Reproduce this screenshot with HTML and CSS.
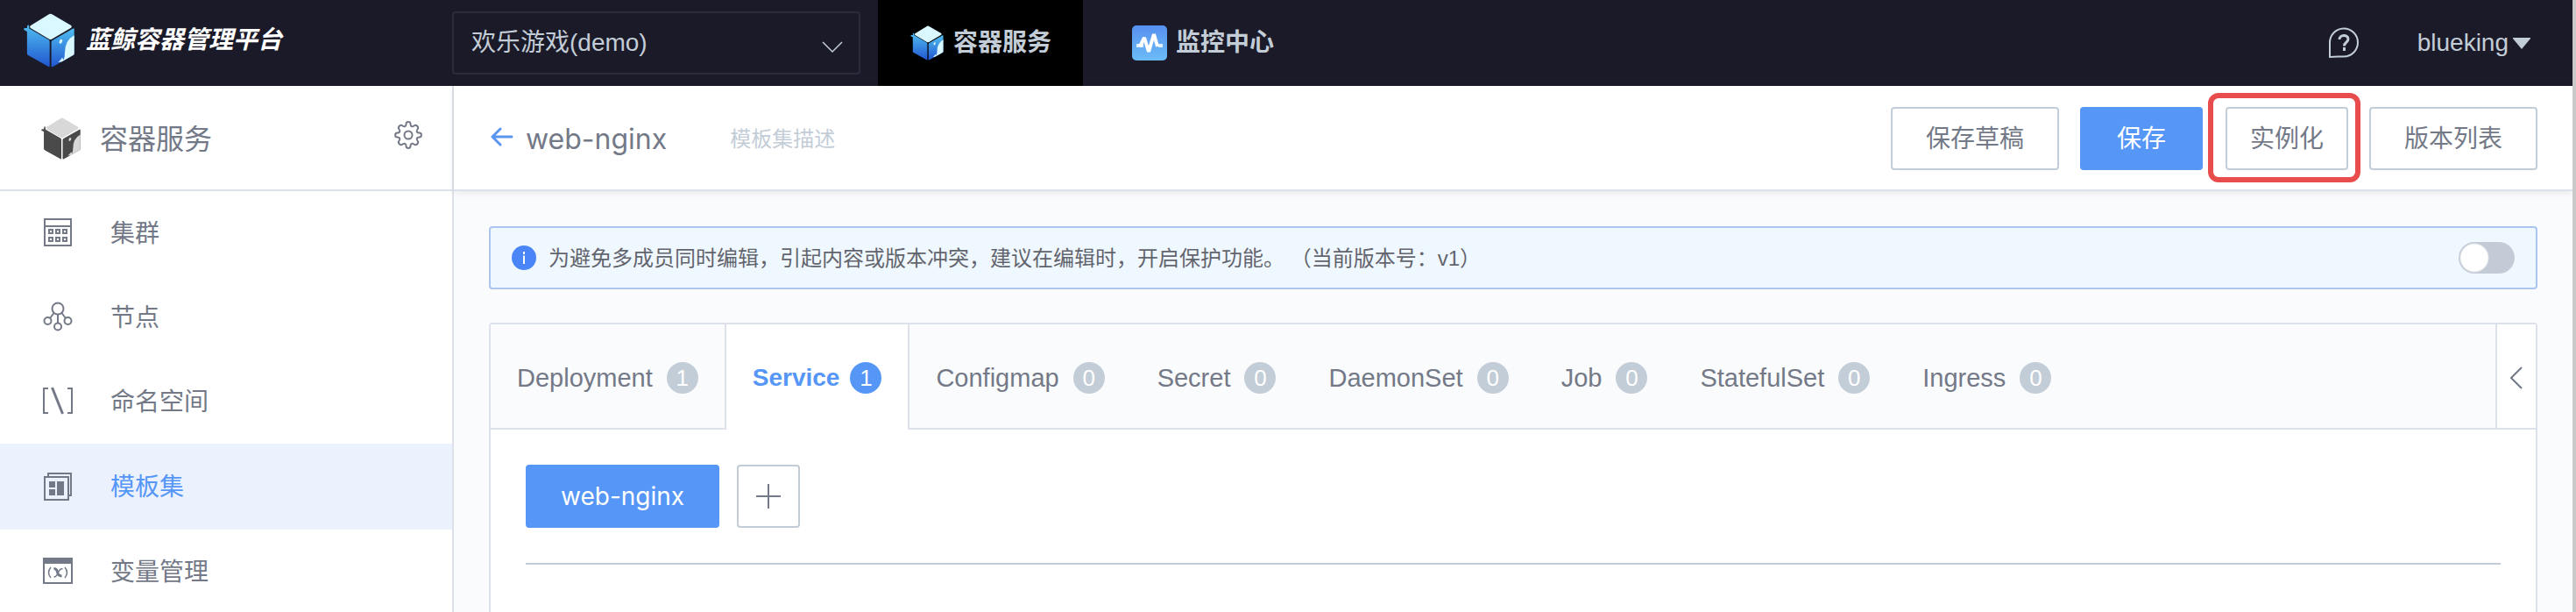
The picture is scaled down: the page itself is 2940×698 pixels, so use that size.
FILE: index.html
```html
<!DOCTYPE html>
<html lang="zh-CN">
<head>
<meta charset="utf-8">
<meta name="viewport" content="width=device-width, initial-scale=1">
<title>蓝鲸容器管理平台</title>
<link rel="stylesheet" href="styles.css">
</head>
<body>
<svg class="defs" aria-hidden="true">
  <defs>
    <linearGradient id="cube-blue" x1="0" y1="0" x2="0" y2="1">
      <stop offset="0" stop-color="#4fbdf0"/>
      <stop offset="1" stop-color="#2156d0"/>
    </linearGradient>
    <linearGradient id="monitor-blue" x1="0" y1="0" x2="0" y2="1">
      <stop offset="0" stop-color="#5790ef"/>
      <stop offset="1" stop-color="#6cbcf8"/>
    </linearGradient>
  </defs>
  <symbol id="cube" viewBox="76 43 182 190">
    <path class="cube-top" d="M168 46q4-2 8 0l68 40q5 4 0 8l-68 40q-4 2-8 0l-66-39q-5-4 0-8z"/>
    <path class="cube-side" d="M90 107l-11-6q-2-4 3-6l8 0 1-9 5-2 2 13 67 39q4 2 4 6v86q0 4-4 2l-71-40q-4-2-4-6z"/>
    <path class="cube-side" d="M175 144q0-4 4-6l72-41q4-2 4 3v84q0 4-4 6l-70 40q-6 3-6-2z"/>
    <path class="cube-top" d="M255 120v64q0 4-4 6l-40 23-12 1q10-7 14-16l4 8q5-8 5-26 0-42 33-60z"/>
    <ellipse class="cube-top" cx="208" cy="142" rx="5" ry="8" transform="rotate(25 208 142)"/>
  </symbol>
</svg>

<header class="topbar">
  <a class="brand" href="#"><svg class="brand-cube cube-color" aria-hidden="true"><use href="#cube"/></svg><span>蓝鲸容器管理平台</span></a>
  <div class="project">
    <select class="project-select" aria-label="项目"><option>欢乐游戏(demo)</option></select>
    <svg class="project-arrow" viewBox="0 0 24 14" aria-hidden="true"><path d="M1 1l11 11L23 1" fill="none" stroke="#c3cdd7" stroke-width="1.5"/></svg>
  </div>
  <nav class="topnav">
    <a class="topnav-item is-active" href="#"><svg class="nav-icon cube-color" aria-hidden="true"><use href="#cube"/></svg>容器服务</a>
    <a class="topnav-item" href="#"><svg class="nav-icon" viewBox="0 0 40 40" aria-hidden="true"><rect width="40" height="40" rx="5" fill="url(#monitor-blue)"/><path d="M5 23h8M30 23h5" fill="none" stroke="#fff" stroke-opacity=".8" stroke-width="4"/><path d="M9 24l5-10 5 16 6-20 4 14" fill="none" stroke="#fff" stroke-width="4" stroke-linejoin="bevel"/></svg>监控中心</a>
  </nav>
  <div class="account">
    <button class="help" type="button" aria-label="帮助"><svg viewBox="0 0 36 36" aria-hidden="true"><path d="M2 34V18A16 16 0 1 1 18 33.500H12L2 34z" fill="none" stroke="#c3cdd7" stroke-width="2"/><path d="M13 14c0-6 10-6 10-.5 0 4-4.500 3.500-4.500 8M18.500 23v4" fill="none" stroke="#c3cdd7" stroke-width="3"/></svg></button>
    <button class="user" type="button">blueking<svg class="caret" viewBox="0 0 20 13" aria-hidden="true"><path d="M0 0h20v1L10 13 0 1z" fill="#c3cdd7"/></svg></button>
  </div>
</header>

<div class="layout">
  <aside class="sidebar">
    <div class="sidebar-head">
      <svg class="side-cube cube-gray" aria-hidden="true"><use href="#cube"/></svg>
      <h2 class="sidebar-title">容器服务</h2>
      <button class="gear" type="button" aria-label="设置"><svg viewBox="0 0 32 32" fill="none" stroke="#737987" stroke-width="2" aria-hidden="true"><path stroke-linejoin="round" d="M13.500 3.500C13.500 .3 18.500 .3 18.500 3.500C18.500 6.500 20.500 7 22.500 5.500C25 3.500 28.500 7 26.500 9.500C25 11.500 25.500 13.500 28.500 13.500C31.700 13.500 31.700 18.500 28.500 18.500C25.500 18.500 25 20.500 26.500 22.500C28.500 25 25 28.500 22.500 26.500C20.500 25 18.500 25.500 18.500 28.500C18.500 31.700 13.500 31.700 13.500 28.500C13.500 25.500 11.500 25 9.500 26.500C7 28.500 3.500 25 5.500 22.500C7 20.500 6.500 18.500 3.500 18.500C.3 18.500 .3 13.500 3.500 13.500C6.500 13.500 7 11.500 5.500 9.500C3.500 7 7 3.500 9.500 5.500C11.500 7 13.500 6.500 13.500 3.500z"/><circle cx="16" cy="16" r="4.500"/></svg></button>
    </div>
    <nav class="menu">
      <a class="menu-item" href="#"><svg class="menu-icon" viewBox="0 0 36 36" fill="none" stroke="#737987" stroke-width="2" aria-hidden="true"><path d="M3 2h30v30H3zM3 10h30M8 14h4v4H8zM16 14h4v4h-4zM24 14h4v4h-4zM8 23h4v4H8zM16 23h4v4h-4zM24 23h4v4h-4z"/></svg><span>集群</span></a>
      <a class="menu-item" href="#"><svg class="menu-icon" viewBox="0 0 36 36" fill="none" stroke="#737987" stroke-width="2" aria-hidden="true"><circle cx="18" cy="8" r="6.500"/><circle cx="6.500" cy="22" r="4"/><circle cx="29.500" cy="22" r="4"/><circle cx="18" cy="28.500" r="4"/><path d="M18 14.500v10M13.500 13L9 19M22.500 13l4.500 6"/></svg><span>节点</span></a>
      <a class="menu-item" href="#"><svg class="menu-icon" viewBox="0 0 36 36" fill="none" stroke="#737987" stroke-width="2" aria-hidden="true"><path d="M7 3H2v28h5M29 3h5v28h-5"/><path d="M11.500 2l12 30" stroke-width="3"/></svg><span>命名空间</span></a>
      <a class="menu-item is-active" href="#"><svg class="menu-icon" viewBox="0 0 36 36" fill="none" stroke="#737987" stroke-width="2" aria-hidden="true"><path d="M3 7h27v26H3zM7 7V3h26v25h-3"/><path d="M8 12h7v7H8zM8 21h7v7H8zM17 12h8v16h-8z" fill="#737987" stroke="none"/></svg><span>模板集</span></a>
      <a class="menu-item" href="#"><svg class="menu-icon" viewBox="0 0 36 36" fill="none" stroke="#737987" stroke-width="2" aria-hidden="true"><path d="M2 3h32v28H2z"/><path d="M1 2h34v7H1z" fill="#737987" stroke="none"/><path d="M10 13q-5 6 0 12M26 13q5 6 0 12M23.500 15q-3-1-5 4t-5 5" stroke-width="1.500"/><path d="M13.500 15q3-1 4 3.500t5 4.500" stroke-width="3"/></svg><span>变量管理</span></a>
    </nav>
  </aside>

  <main class="main">
    <div class="page-head">
      <button class="back" type="button" aria-label="返回"><svg viewBox="0 0 26 22" fill="none" stroke="#5a96f0" stroke-width="3" stroke-linecap="round" stroke-linejoin="round" aria-hidden="true"><path d="M24 11H2M11 2l-9 9 9 9"/></svg></button>
      <h1 class="page-title">web-nginx</h1>
      <span class="page-desc">模板集描述</span>
      <div class="actions">
        <button class="btn" type="button">保存草稿</button>
        <button class="btn btn-primary" type="button">保存</button>
        <button class="btn btn-marked" type="button">实例化</button>
        <button class="btn" type="button">版本列表</button>
      </div>
    </div>

    <div class="content">
      <div class="notice">
        <svg class="notice-icon" viewBox="0 0 28 28" aria-hidden="true"><circle cx="14" cy="14" r="14" fill="#4a86f7"/><path d="M14 7v3M14 11.500V21" stroke="#fff" stroke-width="2"/></svg>
        <label class="notice-text" for="protect">为避免多成员同时编辑，引起内容或版本冲突，建议在编辑时，开启保护功能。 （当前版本号：v1）</label>
        <input class="switch" type="checkbox" id="protect">
      </div>

      <section class="panel">
        <div class="tabs" role="tablist">
          <button class="tab" role="tab" type="button">Deployment<span class="count">1</span></button>
          <button class="tab is-active" role="tab" type="button" aria-selected="true">Service<span class="count">1</span></button>
          <button class="tab" role="tab" type="button">Configmap<span class="count">0</span></button>
          <button class="tab" role="tab" type="button">Secret<span class="count">0</span></button>
          <button class="tab" role="tab" type="button">DaemonSet<span class="count">0</span></button>
          <button class="tab" role="tab" type="button">Job<span class="count">0</span></button>
          <button class="tab" role="tab" type="button">StatefulSet<span class="count">0</span></button>
          <button class="tab" role="tab" type="button">Ingress<span class="count">0</span></button>
          <span class="tabs-rest"></span>
          <button class="collapse" type="button" aria-label="展开"><svg viewBox="0 0 14 26" aria-hidden="true"><path d="M13 1L1 13l12 12" fill="none" stroke="#737987" stroke-width="2"/></svg></button>
        </div>
        <div class="panel-body">
          <div class="resources">
            <button class="btn btn-primary resource" type="button">web-nginx</button>
            <button class="btn add" type="button" aria-label="添加"><svg viewBox="0 0 28 28" aria-hidden="true"><path d="M14 0v28M0 14h28" stroke="#737987" stroke-width="2"/></svg></button>
          </div>
        </div>
      </section>
    </div>
  </main>
</div>
</body>
</html>
```
FILE: styles.css
```css
* { box-sizing: border-box; }

body {
  margin: 0;
  min-height: 100vh;
  display: flex;
  flex-direction: column;
  border-right: 4px solid #c9c9c9;
  background: #fafbfd;
  color: #737987;
  font: 28px/40px "Liberation Sans", "Noto Sans CJK SC", sans-serif;
}

a { color: inherit; text-decoration: none; }

button {
  margin: 0;
  padding: 0;
  border: 0;
  background: none;
  color: inherit;
  font: inherit;
  cursor: pointer;
}

svg { display: block; flex: none; }
.defs { position: absolute; width: 0; height: 0; }

.cube-color { --top: #daf8ff; --side: url(#cube-blue); }
.cube-gray { --top: #d8d8d8; --side: #4a4a4a; }
.cube-top { fill: var(--top); }
.cube-side { fill: var(--side); }

/* Top bar */
.topbar {
  display: flex;
  align-items: center;
  height: 98px;
  background: #1b1a29;
  color: #c3cdd7;
}

.brand {
  display: flex;
  align-items: center;
  gap: 12px;
  width: 516px;
  padding: 0 0 6px 26px;
  color: #fff;
  font-weight: bold;
  font-style: italic;
}
.brand-cube { width: 60px; height: 62px; }

.project { position: relative; width: 466px; }
.project-select {
  display: block;
  width: 100%;
  height: 72px;
  padding: 0 60px 0 20px;
  border: 2px solid #2c2b3c;
  border-radius: 4px;
  appearance: none;
  background: none;
  color: inherit;
  font: inherit;
}
.project-arrow {
  position: absolute;
  right: 20px;
  bottom: 24px;
  width: 24px;
  height: 14px;
  pointer-events: none;
}

.topnav { display: flex; align-self: stretch; margin-left: 20px; font-weight: bold; }
.topnav-item {
  display: flex;
  align-items: center;
  gap: 10px;
  padding: 0 36px;
  margin-right: 20px;
}
.topnav-item.is-active { background: #000; }
.nav-icon { width: 40px; height: 40px; }

.account { display: flex; align-items: center; gap: 66px; margin-left: auto; padding-right: 48px; }
.help svg { width: 36px; height: 36px; }
.user { display: flex; align-items: center; gap: 5px; }
.caret { width: 20px; height: 13px; }

.layout { display: flex; flex: 1; }

/* Sidebar */
.sidebar { flex: none; width: 518px; border-right: 2px solid #dde2ea; background: #fff; }
.sidebar-head {
  display: flex;
  align-items: center;
  height: 120px;
  padding: 2px 34px 0 46px;
  border-bottom: 2px solid #dde2ea;
}
.side-cube { width: 47px; height: 48px; }
.sidebar-title { flex: 1; margin: 0 0 0 21px; padding-top: 2px; font-size: 32px; font-weight: normal; }
.gear { padding-bottom: 8px; }
.gear svg { width: 32px; height: 32px; }

.menu-item {
  display: flex;
  align-items: center;
  gap: 42px;
  height: 96px;
  padding-left: 48px;
}
.menu-item span { padding-top: 2px; }
.menu-item.is-active { height: 98px; background: #ebf2fe; color: #5596f6; }
.menu-icon { width: 36px; height: 36px; }

/* Page header */
.main { flex: 1; min-width: 0; display: flex; flex-direction: column; }
.page-head {
  display: flex;
  align-items: center;
  height: 120px;
  padding: 2px 40px 0 42px;
  border-bottom: 2px solid #dde2ea;
  background: #fff;
  box-shadow: 0 2px 8px rgba(0, 0, 0, .08);
}
.back { padding-bottom: 4px; }
.back svg { width: 26px; height: 22px; }
.page-title { margin: 0 0 0 14px; padding-top: 2px; font: 32px/40px Inter, sans-serif; }
.page-desc { margin-left: 72px; padding-top: 2px; color: #c3cdd7; font-size: 24px; }

.actions { display: flex; gap: 24px; margin-left: auto; }
.btn {
  height: 72px;
  padding: 2px 38px 0;
  border: 2px solid #c3cdd7;
  border-radius: 4px;
  background: #fff;
}
.btn-primary { padding: 2px 40px 0; border-color: #5596f6; background: #5596f6; color: #fff; }
.btn-marked { position: relative; margin-left: 2px; padding: 2px 26px 0; }
.btn-marked::after {
  content: "";
  position: absolute;
  inset: -18px -16px -16px -22px;
  border: 6px solid #e84c4c;
  border-radius: 12px;
}

.content { display: flex; flex-direction: column; flex: 1; padding: 40px 40px 0; }

/* Notice */
.notice {
  display: flex;
  align-items: center;
  gap: 14px;
  height: 72px;
  padding: 0 24px;
  border: 2px solid #a9c5f0;
  border-radius: 4px;
  background: #f0f8ff;
}
.notice-icon { width: 28px; height: 28px; }
.notice-text { flex: 1; padding-top: 2px; color: #63656e; font-size: 24px; }
.switch {
  flex: none;
  width: 64px;
  height: 36px;
  margin: 0;
  border-radius: 18px;
  appearance: none;
  background: radial-gradient(circle at 18px 18px, #fff 15px, #c3cbd6 17px);
}

/* Resource panel */
.panel {
  display: flex;
  flex-direction: column;
  flex: 1;
  margin-top: 38px;
  border: 2px solid #dde2ea;
  border-bottom: 0;
  border-radius: 4px 4px 0 0;
  background: #fff;
}
.tabs { display: flex; height: 120px; background: #fafbfd; }
.tab {
  display: flex;
  align-items: center;
  gap: 16px;
  padding: 4px 30px 0;
  border-bottom: 2px solid #dde2ea;
  font-size: 29px;
}
.tab.is-active {
  gap: 12px;
  padding-bottom: 2px;
  border: solid #dde2ea;
  border-width: 0 2px;
  background: #fff;
  color: #5596f6;
  font-size: 28px;
  font-weight: bold;
}
.count {
  width: 36px;
  height: 36px;
  border-radius: 50%;
  background: #c3cdd7;
  color: #fff;
  font-size: 26px;
  font-weight: normal;
  line-height: 36px;
  text-align: center;
}
.is-active .count { background: #5596f6; }
.tabs-rest { flex: 1; border-bottom: 2px solid #dde2ea; }
.collapse {
  display: flex;
  align-items: center;
  justify-content: center;
  width: 46px;
  padding-top: 4px;
  border: solid #dde2ea;
  border-width: 0 0 2px 2px;
  background: #fff;
}
.collapse svg { width: 14px; height: 26px; }

.panel-body { padding: 40px; }
.resources { display: flex; gap: 20px; padding-bottom: 40px; border-bottom: 2px solid #c3cdd7; }
.resource { padding: 0 38px; font-family: Inter, sans-serif; }
.add { display: flex; align-items: center; justify-content: center; width: 72px; padding: 0; }
.add svg { width: 28px; height: 28px; }
```
